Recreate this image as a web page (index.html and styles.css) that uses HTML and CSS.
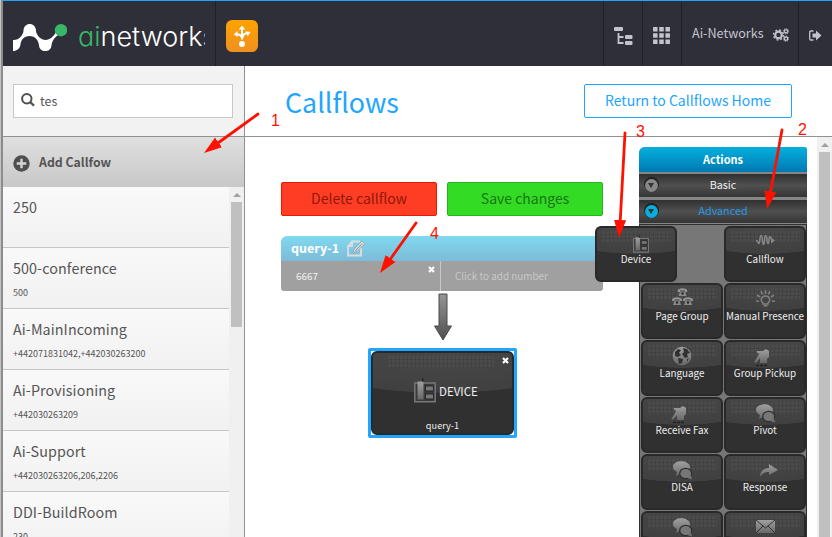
FILE: index.html
```html
<!DOCTYPE html>
<html lang="en">
<head>
<meta charset="utf-8">
<title>Callflows</title>
<link rel="stylesheet" href="styles.css">
</head>
<body>
<svg class="defs" width="0" height="0" aria-hidden="true">
  <defs>
    <linearGradient id="metal" x1="0" y1="0" x2="0" y2="1"><stop offset="0" stop-color="#a0a0a0"/><stop offset="1" stop-color="#686868"/></linearGradient>
    <linearGradient id="orange" x1="0" y1="0" x2="0" y2="1"><stop offset="0" stop-color="#ffa200"/><stop offset="1" stop-color="#ef9020"/></linearGradient>
    <linearGradient id="shaft" x1="0" y1="0" x2="0" y2="1"><stop offset="0" stop-color="#959595"/><stop offset="1" stop-color="#505050"/></linearGradient>
    <symbol id="device" viewBox="0 0 22 24">
      <path d="M.8 4.500h20.400v18.700H.8z" fill="#3b3b3b" stroke="#777" stroke-width="1.500"/>
      <path d="M3.500 3h6v18h-6z" fill="url(#metal)"/>
      <path d="M8 0h1.500v3H8z" fill="#222"/>
      <path d="M11.500 7.500h8v5h-8zM11.500 15.500h8v5h-8z" fill="#777" stroke="#272727"/>
    </symbol>
    <symbol id="callflow" viewBox="0 0 24 24">
      <path d="M3 9.500c2 0 2 3 3 3s.5-8 2.200-8 .8 9 2.300 9 .5-9 2.200-9 .8 8 2.300 8 .5-7 2-7 1 4 2 4" fill="none" stroke="#858585" stroke-width="1.600"/>
      <path d="M18 6.500l4 3-4 3z" fill="#858585"/>
    </symbol>
    <symbol id="phone" viewBox="0 0 10 8">
      <path d="M0 3C0-.6 10-.6 10 3v1H7.500V2.500h-5V4H0z" fill="#959595"/>
      <path d="M2.500 3.500h5L9 8H1z" fill="#888"/><circle cx="5" cy="5.500" r="1.200" fill="#292929"/>
    </symbol>
    <symbol id="group" viewBox="0 0 24 24">
      <use href="#phone" x="7.500" y="0" width="10" height="8"/><use href="#phone" x="2" y="9" width="10" height="8"/><use href="#phone" x="13" y="9" width="10" height="8"/>
    </symbol>
    <symbol id="bulb" viewBox="0 0 24 24">
      <path d="M3 13l3 .3M4 7l3 2M8 3l1.500 3.500M12.500 2v4M17 3l-1.500 3.500M21 7l-3 2M22 13l-3 .3" stroke="#808080" stroke-width="1.600"/>
      <path d="M10 16v-1c-3-2-2-7 2.500-7s5.500 5 2.500 7v1zM10.500 17.700h4" fill="none" stroke="#808080" stroke-width="1.500"/>
    </symbol>
    <symbol id="globe" viewBox="0 0 24 24">
      <circle cx="12" cy="11" r="9.300" fill="url(#metal)"/>
      <path d="M5 7l3-3 3 1-2 3 2 2-3 2-3-1zM13 3l4 1 3 4-3 1 1 3-3 1-3-4 2-2zM8 13l5 1-1 4-3 1zM17 14l2-1-2 4z" fill="#303030"/>
    </symbol>
    <symbol id="hand" viewBox="0 0 24 24">
      <path d="M6 4h6l3-2 3 2v6l-2 2v4h-7v-5l-3 4-2 1-.5-1.500L7 9l1-2.500L5.500 5.500z" fill="url(#metal)"/>
      <path d="M5 18.500h3m1 0h3m1 0h3" stroke="#222" stroke-width="1.500"/>
    </symbol>
    <symbol id="chat" viewBox="0 0 24 24">
      <path d="M3 8C3 .6 19 .4 20 8c0 3-3 5-7 5l-7 4 1-4C5 12 3 10 3 8z" fill="url(#metal)"/>
      <ellipse cx="15.700" cy="14.500" rx="6" ry="5.200" fill="#777" stroke="#303030" stroke-width="1.300"/>
      <path d="M17 19l5 1.500-1-4.500z" fill="#707070"/>
    </symbol>
    <symbol id="reply" viewBox="0 0 24 24"><path d="M4 18c0-6 4-9 9-9V5l9 6-9 5v-3c-4 0-6 1-9 5z" fill="url(#metal)"/></symbol>
    <symbol id="mail" viewBox="0 0 24 24"><path d="M3 4h19v13H3z" fill="url(#metal)"/><path d="M3 4l9.500 8L22 4M3 17l7-7m12 7l-7-7" fill="none" stroke="#303030"/></symbol>
  </defs>
</svg>

<div class="app">
  <header class="topbar">
    <div class="brand">
      <svg class="brand-mark" viewBox="0 0 54 27" width="54" height="27">
        <path d="M0 16C6 16.500 10 11 10.500 7 10.500-2.300 23-2.300 23 7c.5 4.500 5 9 9.500 9S41 12 43 8l3 2.500c-4 2.500-7 6-7.500 11-.5 7.500-12 7.500-12.500 0C25.500 16 22 12 16.500 12S8 16 7.500 20.500C7 24.500 4 27 0 27z" fill="#fff"/>
        <circle cx="48" cy="6.200" r="6.200" fill="#38b768"/>
      </svg>
      <span class="brand-name"><b>ai</b>networks</span>
    </div>
    <svg class="app-icon" viewBox="0 0 32 32" width="32" height="32">
      <rect width="32" height="32" rx="6" fill="url(#orange)"/>
      <path d="M16 19.500V9M15.500 17.500c0-2-2-3.300-5-3.300M16.500 18c0-3 2-4.500 5-5" fill="none" stroke="#fff" stroke-width="2"/>
      <path d="M16 5.500l3.300 4h-6.600zM7.800 14.200l3.700-3.200v6zM24.500 12l-5-.8 2.300 5z" fill="#fff"/><circle cx="16" cy="24" r="3" fill="#fff"/>
    </svg>
    <nav class="tools">
      <div class="tool tool-tree"><svg width="19" height="18" viewBox="0 0 19 18"><rect width="9" height="4" rx="1" fill="#c3c3ce"/><rect x="11" y="8" width="7.500" height="4" rx="1" fill="#c3c3ce"/><rect x="11" y="14" width="7.500" height="4" rx="1" fill="#c3c3ce"/><path d="M4.500 6v10H9.500M4.500 10H9.500" fill="none" stroke="#c3c3ce" stroke-width="1.800"/></svg></div>
      <div class="tool tool-grid"><svg width="17" height="17" viewBox="0 0 17 17"><path d="M2.300 0v17M8.500 0v17M14.700 0v17" stroke="#c3c3ce" stroke-width="4.500" stroke-dasharray="4.600 1.600"/></svg></div>
      <div class="tool tool-account"><span>Ai-Networks</span>
        <svg width="16" height="14" viewBox="0 0 16 14" fill="none" stroke="#c3c3ce"><circle cx="5.500" cy="7" r="3.300" stroke-width="2.200"/><circle cx="5.500" cy="7" r="5" stroke-width="1.400" stroke-dasharray="1.900 2.030"/><circle cx="13" cy="3.300" r="1.700" stroke-width="1.400"/><circle cx="13" cy="3.300" r="2.700" stroke-width=".8" stroke-dasharray="1.100 1"/><circle cx="13" cy="10.700" r="1.700" stroke-width="1.400"/><circle cx="13" cy="10.700" r="2.700" stroke-width=".8" stroke-dasharray="1.100 1"/></svg></div>
      <div class="tool tool-exit"><svg width="13" height="11" viewBox="0 0 13 11"><path d="M4.500 1H2Q.7 1 .7 2.200v6.600Q.7 10 2 10h2.500" fill="none" stroke="#c3c3ce" stroke-width="1.300"/><path d="M3.500 3.500H7V.5l5.500 5L7 10.500v-3H3.500z" fill="#c3c3ce"/></svg></div>
    </nav>
  </header>

  <div class="body">
    <aside class="sidebar">
      <div class="search-area"><div class="search">
        <svg width="14" height="14" viewBox="0 0 14 14"><circle cx="5.800" cy="5.800" r="4.700" fill="none" stroke="#505050" stroke-width="2"/><path d="M9 9l4 3.700" stroke="#505050" stroke-width="2.300"/></svg>
        <span>tes</span></div></div>
      <div class="add">
        <svg width="17" height="17" viewBox="0 0 17 17"><circle cx="8.500" cy="8.500" r="8.200" fill="#4e4e4e"/><path d="M8.500 3.700v9.600M3.700 8.500h9.600" stroke="#d5d5d5" stroke-width="2.400"/></svg>
        <span>Add Callfow</span></div>
      <div class="list-wrap">
        <div class="list">
          <div class="row"><div class="name">250</div></div>
          <div class="row"><div class="name">500-conference</div><div class="nums">500</div></div>
          <div class="row"><div class="name">Ai-MainIncoming</div><div class="nums">+442071831042,+442030263200</div></div>
          <div class="row"><div class="name">Ai-Provisioning</div><div class="nums">+442030263209</div></div>
          <div class="row"><div class="name">Ai-Support</div><div class="nums">+442030263206,206,2206</div></div>
          <div class="row"><div class="name">DDI-BuildRoom</div><div class="nums">230</div></div>
        </div>
        <div class="scroll"><i class="scroll-up"></i><i class="thumb thumb-list"></i></div>
      </div>
    </aside>

    <main class="main">
      <div class="main-head"><h1>Callflows</h1><div class="return">Return to Callflows Home</div></div>
      <div class="work">
        <section class="editor">
          <div class="buttons"><div class="btn delete">Delete callflow</div><div class="btn save">Save changes</div></div>
          <div class="root">
            <div class="root-head"><span>query-1</span>
              <svg width="19" height="17" viewBox="0 0 19 17"><path d="M5 1.500h8M14 8v7.500H1V6l4-4.500V6H1" fill="none" stroke="#ddd" stroke-width="1.800"/><path d="M6 13l1-4 8-8 3 2.500-8 8z" fill="#d5d5d5" stroke="#8aa4ae" stroke-width=".7"/><path d="M8 11l7-7" stroke="#8e9da3"/></svg>
            </div>
            <div class="root-body"><div class="number"><span>6667</span>
              <svg class="cross" width="7" height="7" viewBox="0 0 7 7"><path d="M1 1l5 5M6 1L1 6" stroke="#fff" stroke-width="2.200"/></svg></div>
              <div class="add-number">Click to add number</div></div>
          </div>
          <svg class="down" width="20" height="48" viewBox="0 0 20 48"><path d="M6 1h8v32h4.500L10 47 1.500 33H6z" fill="url(#shaft)" stroke="#4b4b4b"/></svg>
          <div class="node"><div class="node-inner">
            <svg class="cross" width="7" height="7" viewBox="0 0 7 7"><path d="M1 1l5 5M6 1L1 6" stroke="#fff" stroke-width="2.200"/></svg>
            <div class="node-title"><svg width="22" height="25"><use href="#device" width="22" height="25"/></svg><span>DEVICE</span></div>
            <div class="node-sub">query-1</div>
          </div></div>
        </section>

        <section class="actions">
          <div class="actions-title">Actions</div>
          <div class="category"><i class="knob"></i>Basic</div>
          <div class="category open"><i class="knob"></i>Advanced</div>
          <div class="tiles">
            <div class="tile dragging"><svg class="device-icon"><use href="#device" width="16" height="18"/></svg><span>Device</span></div>
            <div class="tile"><svg><use href="#callflow"/></svg><span>Callflow</span></div>
            <div class="tile"><svg><use href="#group"/></svg><span>Page Group</span></div>
            <div class="tile"><svg><use href="#bulb"/></svg><span>Manual Presence</span></div>
            <div class="tile"><svg><use href="#globe"/></svg><span>Language</span></div>
            <div class="tile"><svg class="hand-icon"><use href="#hand"/></svg><span>Group Pickup</span></div>
            <div class="tile"><svg class="hand-icon"><use href="#hand"/></svg><span>Receive Fax</span></div>
            <div class="tile"><svg><use href="#chat"/></svg><span>Pivot</span></div>
            <div class="tile"><svg><use href="#chat"/></svg><span>DISA</span></div>
            <div class="tile"><svg class="reply-icon"><use href="#reply"/></svg><span>Response</span></div>
            <div class="tile"><svg><use href="#chat"/></svg></div>
            <div class="tile"><svg><use href="#mail"/></svg></div>
          </div>
        </section>
        <div class="scroll"><i class="scroll-up"></i><i class="thumb"></i></div>
      </div>
    </main>
  </div>

  <svg class="notes" width="832" height="537" viewBox="0 0 832 537">
    <defs><marker id="head" markerUnits="userSpaceOnUse" markerWidth="20" markerHeight="14" refX="18" refY="6" orient="auto"><path d="M0 0l18 6-18 6z" fill="#f10"/></marker></defs>
    <g stroke="#f10" stroke-width="2.800" stroke-linecap="round">
      <path d="M258 114L218 143"/><path d="M782 130L770 195"/><path d="M625 133L620 225"/><path d="M416 223L389 261"/>
    </g>
    <g fill="none" stroke="none">
      <path d="M258 114L204 153" marker-end="url(#head)"/><path d="M782 130L767 209" marker-end="url(#head)"/><path d="M625 133L619 238" marker-end="url(#head)"/><path d="M416 223L380 273" marker-end="url(#head)"/>
    </g>
    <g class="note-text"><text x="271" y="126">1</text><text x="798" y="135">2</text><text x="636" y="137">3</text><text x="430" y="239">4</text></g>
  </svg>
</div>
</body>
</html>
```
FILE: styles.css
```css
* { box-sizing: border-box; }
body { margin: 0; font-family: "Noto Sans CJK SC", "Noto Sans", sans-serif; color: #555; background: linear-gradient(90deg, #c4c4c4 1px, #8c8c8c 1px 3px, #fff 3px); }
svg { display: block; flex: none; }
.defs { position: absolute; }
.app { position: relative; width: 832px; height: 537px; overflow: hidden; display: flex; flex-direction: column; padding-left: 3px; }

.topbar { height: 66px; flex: none; display: flex; align-items: center; background: #2f2f39; border-top: 1px solid #22a5ff; }
.brand { width: 213px; height: 65px; padding-left: 10px; display: flex; align-items: center; border-right: 1px solid #202027; }
.brand-mark { margin-top: 7px; }
.brand-name { width: 127px; margin-left: 11px; margin-top: 7px; overflow: hidden; white-space: nowrap; font: 300 27px/36px Inter, sans-serif; font-feature-settings: "cv11"; color: #fff; letter-spacing: 0; }
.brand-name b { font-weight: 300; color: #38b768; }
.app-icon { margin: 4px 0 0 10px; }
.tools { margin-left: auto; height: 65px; display: flex; color: #c3c3ce; }
.tool { display: flex; align-items: center; border-left: 1px solid #202027; }
.tool-tree { width: 39px; padding: 4px 0 0 10px; }
.tool-grid { width: 39px; padding: 4px 0 0 10px; }
.tool-account { width: 117px; padding-left: 10px; font-size: 12.6px; line-height: 20px; }
.tool-account span { width: 72px; margin-top: -2px; }
.tool-account svg { margin: 3px 0 0 9px; }
.tool-exit { width: 34px; padding: 3px 0 0 10px; }

.body { flex: 1; min-height: 0; display: flex; }
.sidebar { width: 242px; flex: none; display: flex; flex-direction: column; background: #f2f2f2; border-right: 1px solid #919191; }
.search-area { height: 71px; padding: 18px 0 0 10px; border-bottom: 1px solid #919191; }
.search { width: 220px; height: 34px; padding-left: 7px; display: flex; align-items: center; gap: 5px; background: #fff; border: 1px solid #c8c8c8; font-size: 12.5px; line-height: 20px; }
.search svg { margin-top: -3px; }
.add { height: 50px; flex: none; padding-left: 10px; display: flex; align-items: center; gap: 9px; background: linear-gradient(#dfdfdf, #c8c8c8); font-size: 12.3px; font-weight: 700; line-height: 20px; }
.add svg { margin-top: 2px; }
.list-wrap { flex: 1; min-height: 0; display: flex; }
.list { width: 226px; overflow: hidden; }
.row { height: 61px; padding: 9px 0 0 10px; background: linear-gradient(#f9f9f9, #f1f1f1); border-bottom: 1px solid #c6c6c6; }
.name { font-size: 14.3px; line-height: 22px; letter-spacing: .1px; }
.nums { margin-top: 6px; font-size: 9px; line-height: 16px; }
.scroll { width: 15px; flex: none; margin-left: auto; padding-left: 2px; background: #f0f0f0; }
.scroll-up { display: block; width: 0; height: 0; margin: 6px 0 5px 2px; border: 4px solid transparent; border-top: 0; border-bottom-color: #a0a0a0; }
.thumb { display: block; width: 11px; height: 400px; background: #c0c0c0; }
.thumb-list { height: 125px; }

.main { flex: 1; min-width: 0; display: flex; flex-direction: column; }
.main-head { height: 71px; flex: none; padding: 0 40px; display: flex; align-items: center; justify-content: space-between; border-bottom: 1px solid #919191; color: #22a5ff; }
h1 { margin: 1px 0 0; font-size: 26.8px; font-weight: 400; line-height: 36px; }
.return { width: 208px; height: 34px; border: 1px solid #22a5ff; border-radius: 2px; text-align: center; font-size: 14px; line-height: 30px; }
.work { flex: 1; min-height: 0; display: flex; }
.editor { width: 394px; flex: none; padding: 45px 36px 0; display: flex; flex-direction: column; }
.buttons { display: flex; gap: 10px; }
.btn { width: 156px; height: 34px; flex: none; border: 1px solid; border-radius: 2px; text-align: center; font-size: 14px; line-height: 30px; }
.delete { background: #ff3d24; border-color: #e51b00; color: #8e1809; }
.save { background: #33db24; border-color: #25b51c; color: #187512; }
.root { width: 322px; margin-top: 20px; }
.root-head { height: 25px; padding-left: 10px; display: flex; align-items: center; gap: 8px; border-radius: 6px 6px 0 0; background: linear-gradient(#80d9ef, #7dbbd8); color: #fff; font-size: 12.5px; font-weight: 700; line-height: 20px; }
.root-head span { width: 48px; margin-top: -1px; white-space: nowrap; }
.root-body { height: 30px; display: flex; background: #a0a0a0; border-radius: 0 0 3px 3px; font-size: 9.900px; line-height: 30px; color: #f2f2f2; }
.number { width: 160px; padding: 0 5px 0 15px; display: flex; justify-content: space-between; border-right: 1px solid #c9c9c9; }
.number .cross { margin-top: 5px; }
.add-number { padding-left: 14px; color: #c8c8c8; }
.down { margin: 2px 0 0 152px; }
.node { width: 149px; height: 90px; margin: 7px 0 0 87px; border: 3px solid #22a5ff; border-radius: 2px; background: #fff; }
.node-inner, .tile { position: relative; background: radial-gradient(ellipse 110% 50% at 50% 0, #484848 0, #404040 98%, #303030 100%); border: 2px solid #292929; border-radius: 6px; color: #eee; }
.node-inner { height: 84px; }
.node-inner::before, .tile::before { content: ""; position: absolute; top: 3px; left: 4px; right: 4px; height: 11px; background: repeating-linear-gradient(90deg, #414141 0 1px, transparent 1px 4px), repeating-linear-gradient(#4f4f4f 0 3px, #414141 3px 4px); opacity: .65; }
.node-inner::before { left: 14px; right: 18px; }
.node-inner .cross { position: absolute; top: 4px; right: 3px; }
.node-title { height: 30px; margin: 22px 0 0 41px; display: flex; align-items: center; gap: 3px; font-size: 11.5px; line-height: 20px; }
.node-title span { margin-top: 2px; }
.node-sub { margin-top: 12px; text-align: center; font-size: 9.200px; line-height: 16px; }

.actions { width: 168px; margin-top: 10px; flex: none; background: #858585; border-radius: 6px 3px 0 0; }
.actions-title { height: 25px; border-radius: 6px 3px 0 0; background: linear-gradient(#05b0de, #0079b2); color: #fff; text-align: center; font-size: 11px; font-weight: 700; line-height: 25px; }
.category { position: relative; height: 23px; margin-top: 2px; background: linear-gradient(#303030, #505050 50%, #353535); color: #eee; text-align: center; font-size: 10.8px; line-height: 20px; }
.category + .category { margin-top: 3px; }
.open { color: #2299e8; }
.knob { position: absolute; left: 6px; top: 5px; width: 13px; height: 13px; border-radius: 50%; background: #888; box-shadow: 0 -1px 0 1px #222; }
.open .knob { background: #08aee0; }
.knob::after { content: ""; position: absolute; left: 3px; top: 4px; border: 3.500px solid transparent; border-top: 5px solid #333; border-bottom: 0; }
.tiles { margin-top: 1px; padding: 1px 1px 0; display: grid; grid-template-columns: 82px 82px; column-gap: 1px; grid-auto-rows: 56px; row-gap: 1px; background: #777; border: solid #303030; border-width: 1px 1px 0; }
.tile { display: flex; flex-direction: column; align-items: center; font-size: 9.900px; line-height: 16px; white-space: nowrap; }
.tile svg { position: relative; width: 24px; height: 24px; margin: 3px 0 -4px; }
.tile svg.device-icon { width: 16px; height: 18px; margin: 7px 0 -2px 9px; }
.tile svg.hand-icon { margin-left: -5px; margin-top: 5px; margin-bottom: -6px; }
.tile svg.reply-icon { margin-left: 6px; }
.tile span { position: relative; }
.dragging { left: -46px; z-index: 2; }

.notes { position: absolute; left: 0; top: 0; z-index: 5; pointer-events: none; }
.note-text { fill: #f10; font: 16px "Liberation Sans", sans-serif; }
```
